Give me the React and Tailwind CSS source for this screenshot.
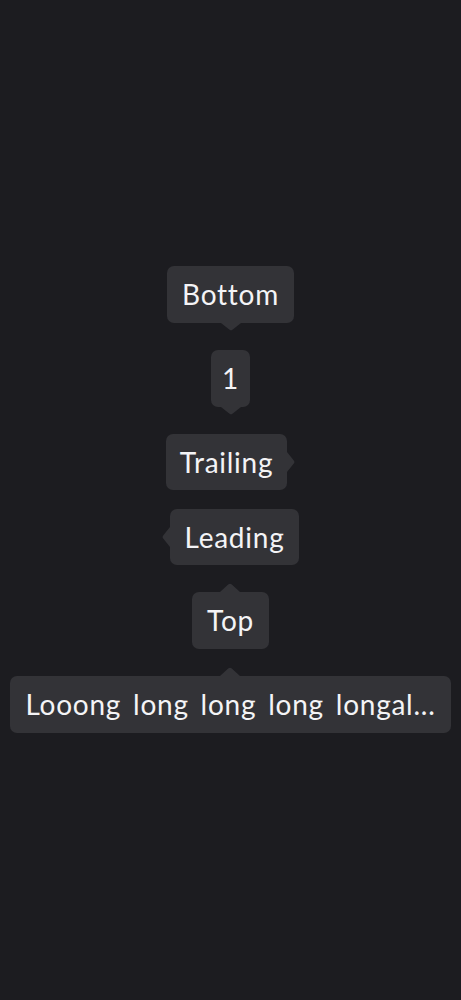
import React from 'react';

const font = { fontFamily: 'Lato, "Open Sans", sans-serif' };

const ArrowDown = () => (
  <svg width="20" height="8" viewBox="0 0 20 8" className="block">
    <path d="M0 0 L8.2 6.6 Q10 8.2 11.8 6.6 L20 0 Z" fill="#333337" />
  </svg>
);

const ArrowUp = () => (
  <svg width="20" height="9" viewBox="0 0 20 9" className="block">
    <path d="M0 9 L8.2 1.6 Q10 -0.1 11.8 1.6 L20 9 Z" fill="#333337" />
  </svg>
);

const ArrowRight = () => (
  <svg width="8" height="20" viewBox="0 0 8 20" className="block">
    <path d="M0 0 L6.6 8.2 Q8.2 10 6.6 11.8 L0 20 Z" fill="#333337" />
  </svg>
);

const ArrowLeft = () => (
  <svg width="8" height="20" viewBox="0 0 8 20" className="block">
    <path d="M8 0 L1.4 8.2 Q-0.2 10 1.4 11.8 L8 20 Z" fill="#333337" />
  </svg>
);

const Box = ({ children, className = '' }) => (
  <div className={`bg-[#333337] rounded-[7px] text-[28px] tracking-[0.75px] [word-spacing:4px] text-[#f4f4f6] whitespace-nowrap ${className}`}>
    {children}
  </div>
);

export default function App() {
  return (
    <div className="min-h-screen w-full bg-[#1c1c20] flex flex-col items-center pt-[266px]" style={font}>
      <div className="flex flex-col items-center">
        <Box className="leading-[57px] px-[15px]">Bottom</Box>
        <ArrowDown />
      </div>

      <div className="flex flex-col items-center mt-[19px]">
        <Box className="leading-[57px] px-[11px]">1</Box>
        <ArrowDown />
      </div>

      <div className="flex items-center mt-[19px]">
        <Box className="leading-[56px] px-[14px]">Trailing</Box>
        <ArrowRight />
      </div>

      <div className="flex items-center mt-[19px]">
        <ArrowLeft />
        <Box className="leading-[56px] px-[15px]">Leading</Box>
      </div>

      <div className="flex flex-col items-center mt-[18px]">
        <ArrowUp />
        <Box className="leading-[57px] px-[15px]">Top</Box>
      </div>

      <div className="flex flex-col items-center mt-[18px]">
        <ArrowUp />
        <Box className="leading-[57px] px-[15px]">Looong long long long longal...</Box>
      </div>
    </div>
  );
}
